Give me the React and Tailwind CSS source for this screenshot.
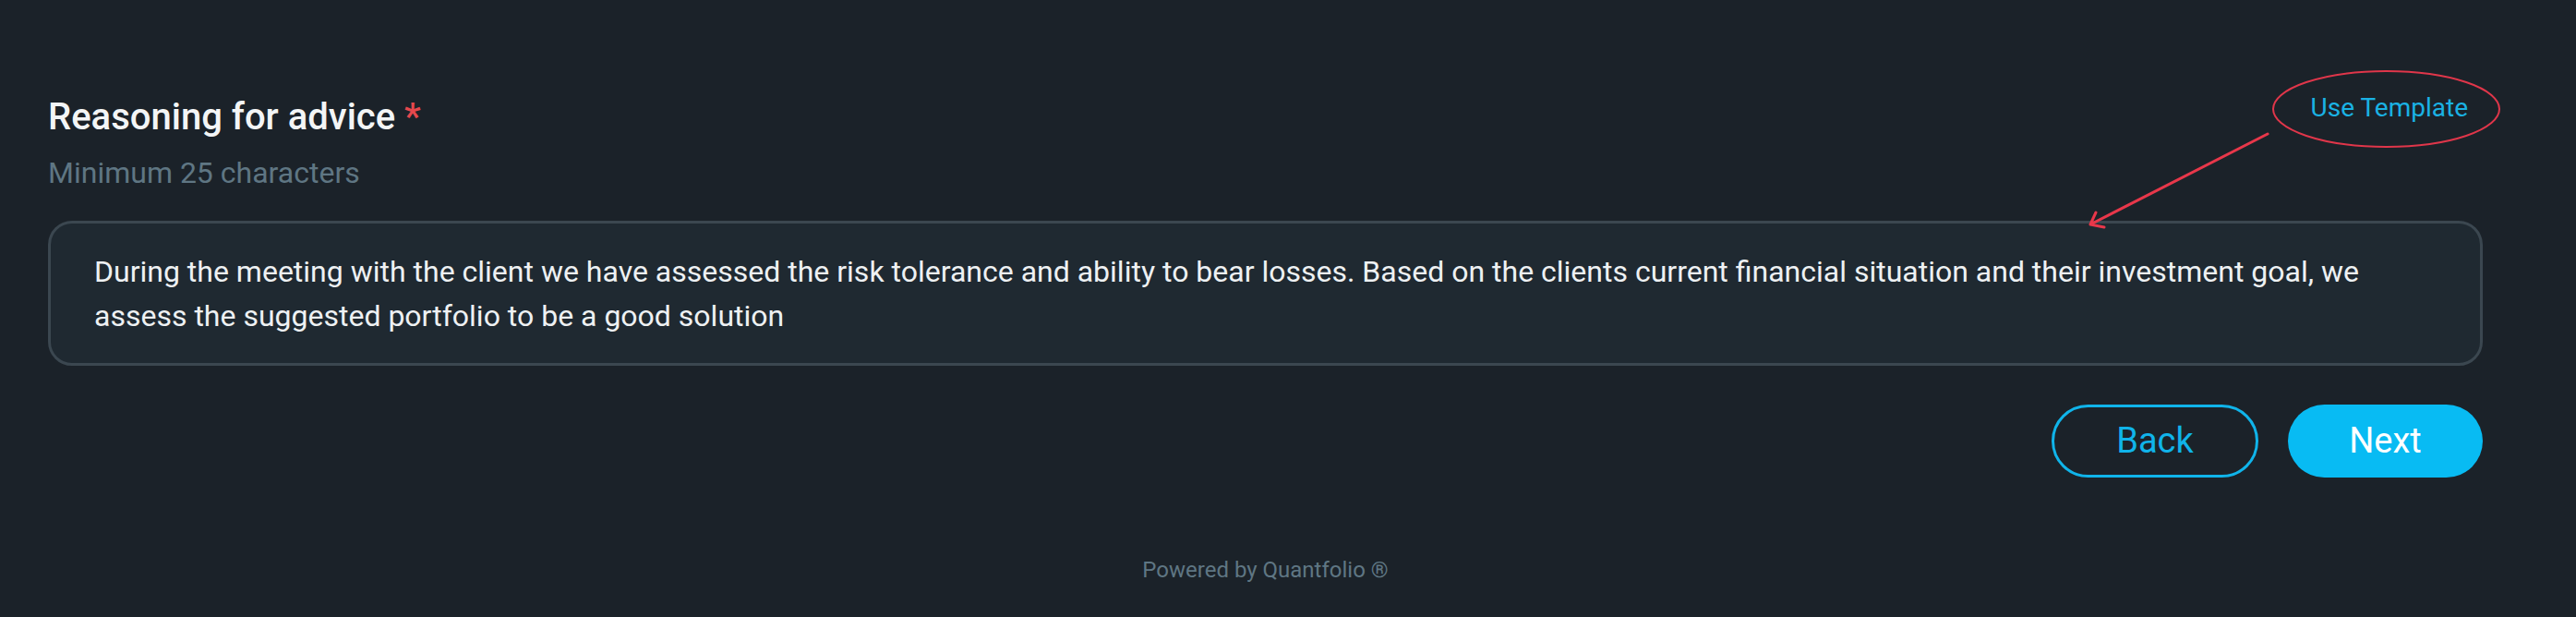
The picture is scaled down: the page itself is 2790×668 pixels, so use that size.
const AdviceStep = () => {
    return (
        <div className="min-h-screen bg-[#1b2229] font-['Roboto',sans-serif]">
            <div className="pl-[52px] pr-[101px] pt-[103px]">
                <div className="flex items-start justify-between">
                    <div>
                        <h2 className="text-[40px] leading-[48px] font-medium text-[#f3f5f6]">
                            Reasoning for advice <span className="text-[#e5484d]">*</span>
                        </h2>
                        <p className="mt-[16px] text-[32px] leading-[40px] text-[#5f7683]">Minimum 25 characters</p>
                    </div>

                    <div className="relative mt-[-2px] mr-[16px]">
                        <button className="text-[28px] leading-[32px] text-[#1ab2e4]">Use Template</button>
                        <svg
                            className="absolute left-[-244px] top-[-26px] pointer-events-none"
                            width="450"
                            height="175"
                            viewBox="0 0 450 175"
                            fill="none"
                        >
                            <ellipse cx="325.5" cy="43" rx="122.5" ry="41" stroke="#e0364a" strokeWidth="2" />
                            <path d="M197 70 L5 168 M11 155 L5 168 L20 171" stroke="#e8374a" strokeWidth="3" strokeLinecap="round" strokeLinejoin="round" />
                        </svg>
                    </div>
                </div>

                <div className="mt-[32px] rounded-[26px] border-[3px] border-[#3b4750] bg-[#1f2931] px-[47px] pt-[28px] pb-[27px]">
                    <p className="text-[32px] leading-[48px] text-[#eef1f3]">
                        During the meeting with the client we have assessed the risk tolerance and ability to bear losses. Based on the clients current financial situation and their investment goal, we assess the suggested portfolio to be a good solution
                    </p>
                </div>

                <div className="mt-[42px] flex justify-end gap-[32px]">
                    <button className="h-[79px] w-[224px] rounded-full border-[3px] border-[#10b4ea] text-[38px] leading-[73px] text-[#10b4ea]">
                        Back
                    </button>
                    <button className="h-[79px] w-[211px] rounded-full bg-[#08bbf3] text-[38px] leading-[79px] text-white">
                        Next
                    </button>
                </div>

                <p className="mt-[84px] text-center text-[24px] leading-[32px] text-[#5f7683]">Powered by Quantfolio ®</p>
            </div>
        </div>
    );
};

export default function App() {
    return <AdviceStep />;
}
